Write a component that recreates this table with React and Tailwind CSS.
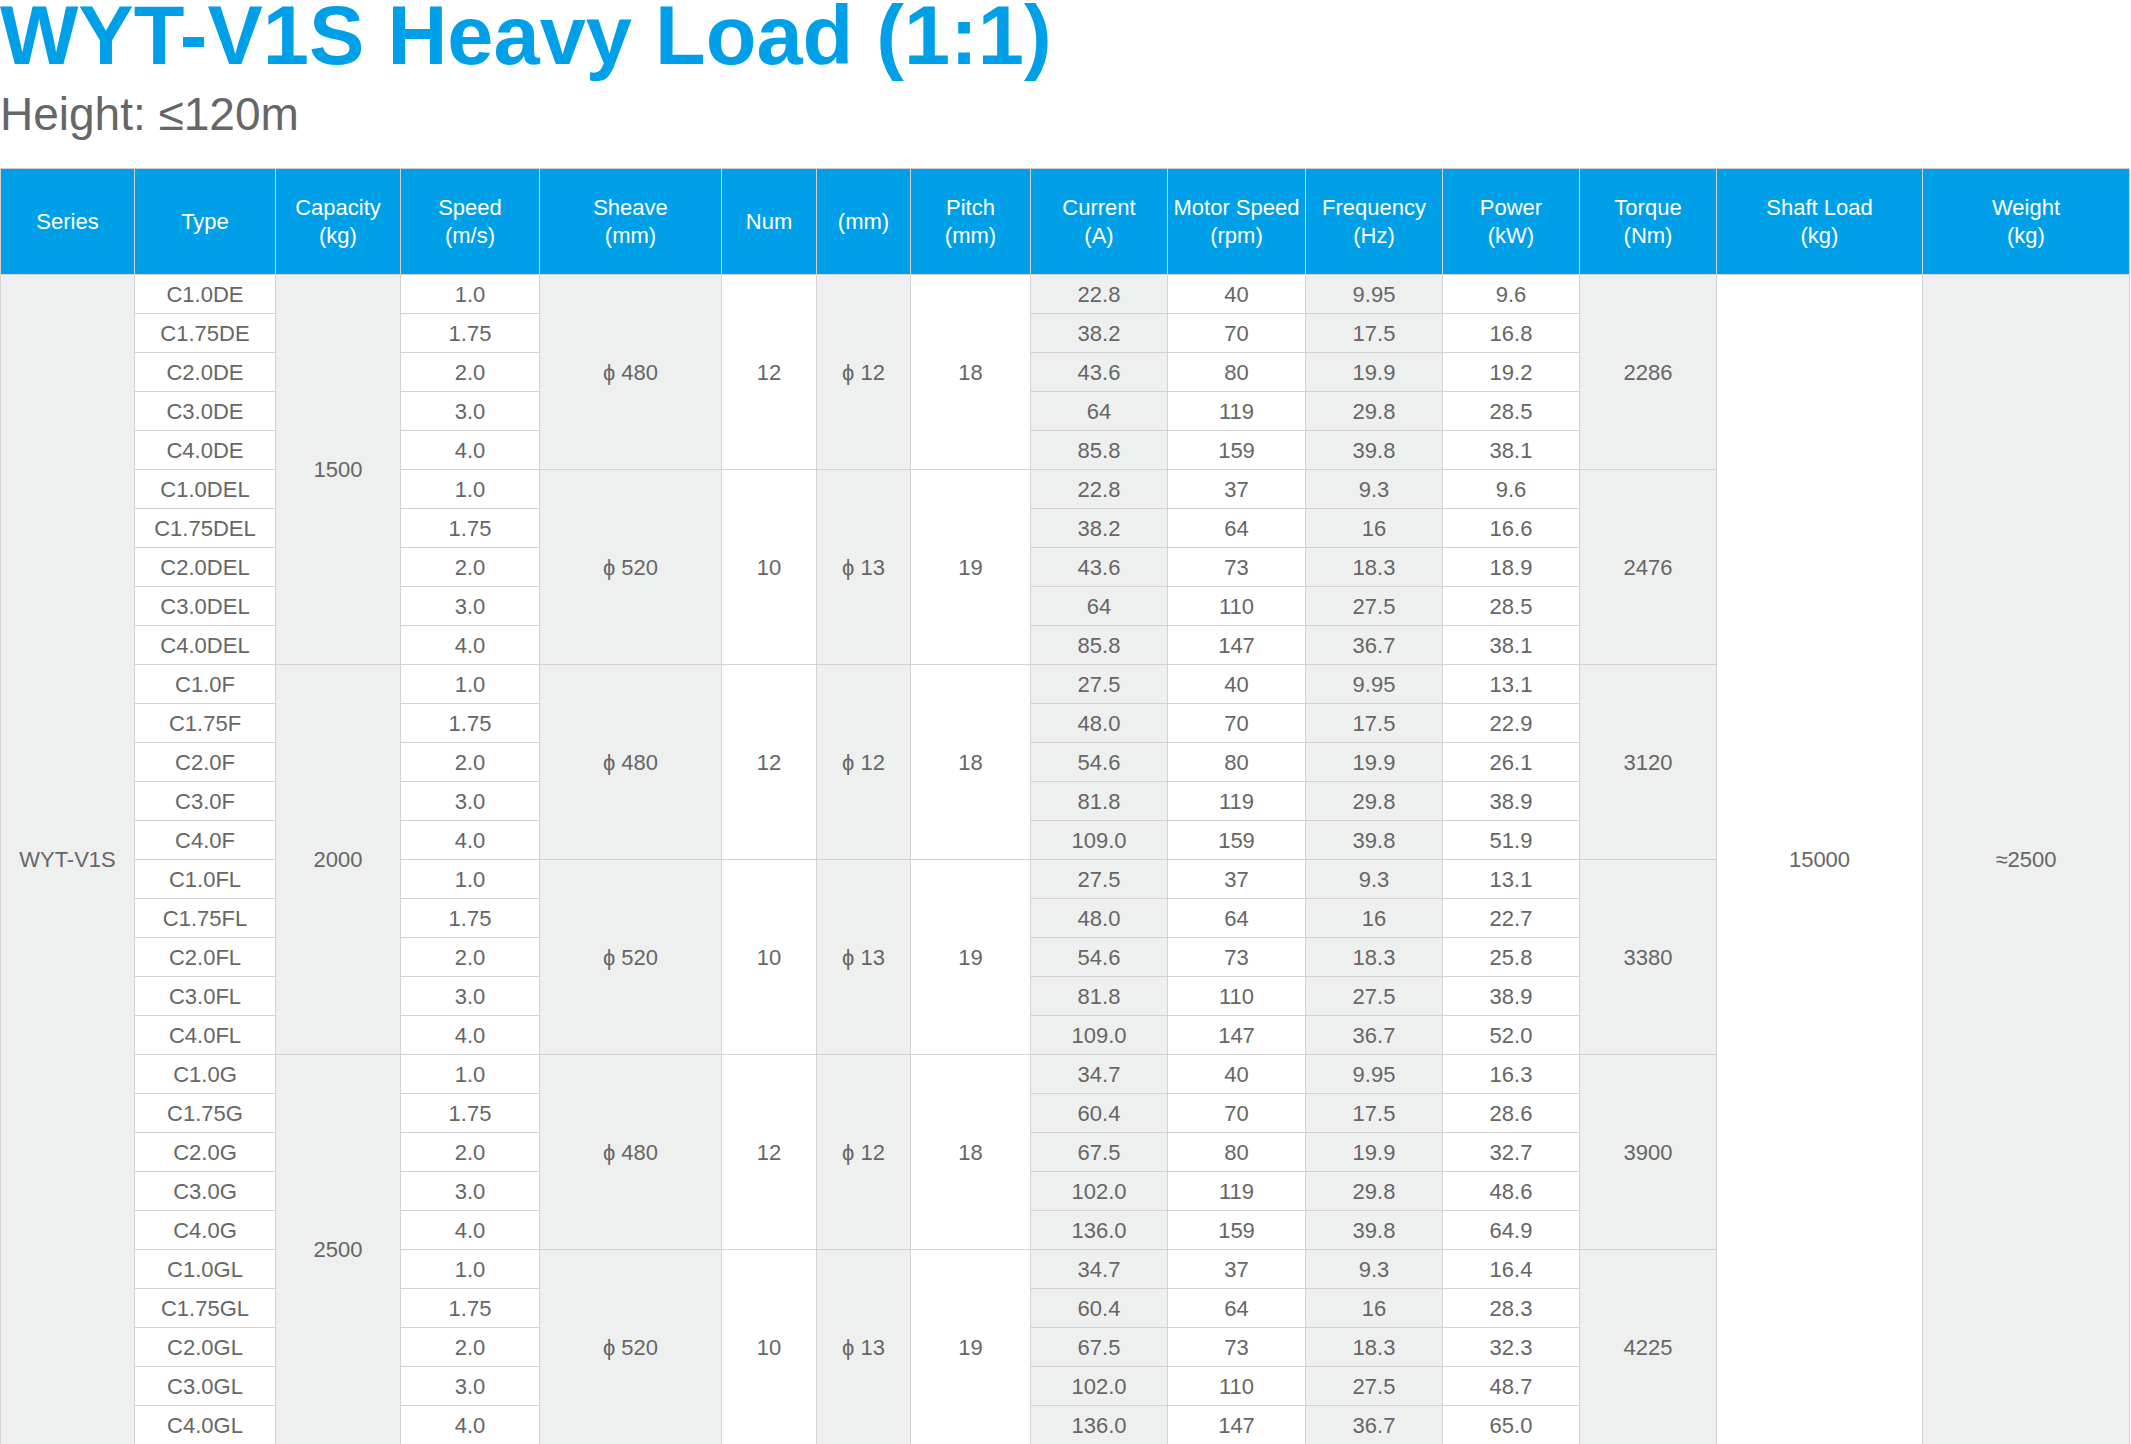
import React from 'react';

const speeds = ['1.0', '1.75', '2.0', '3.0', '4.0'];

const blocks = [
  {
    capacity: '1500',
    groups: [
      {
        suffix: 'DE', sheave: 'ϕ 480', num: '12', rope: 'ϕ 12', pitch: '18', torque: '2286',
        current: ['22.8', '38.2', '43.6', '64', '85.8'],
        motor: ['40', '70', '80', '119', '159'],
        freq: ['9.95', '17.5', '19.9', '29.8', '39.8'],
        power: ['9.6', '16.8', '19.2', '28.5', '38.1'],
      },
      {
        suffix: 'DEL', sheave: 'ϕ 520', num: '10', rope: 'ϕ 13', pitch: '19', torque: '2476',
        current: ['22.8', '38.2', '43.6', '64', '85.8'],
        motor: ['37', '64', '73', '110', '147'],
        freq: ['9.3', '16', '18.3', '27.5', '36.7'],
        power: ['9.6', '16.6', '18.9', '28.5', '38.1'],
      },
    ],
  },
  {
    capacity: '2000',
    groups: [
      {
        suffix: 'F', sheave: 'ϕ 480', num: '12', rope: 'ϕ 12', pitch: '18', torque: '3120',
        current: ['27.5', '48.0', '54.6', '81.8', '109.0'],
        motor: ['40', '70', '80', '119', '159'],
        freq: ['9.95', '17.5', '19.9', '29.8', '39.8'],
        power: ['13.1', '22.9', '26.1', '38.9', '51.9'],
      },
      {
        suffix: 'FL', sheave: 'ϕ 520', num: '10', rope: 'ϕ 13', pitch: '19', torque: '3380',
        current: ['27.5', '48.0', '54.6', '81.8', '109.0'],
        motor: ['37', '64', '73', '110', '147'],
        freq: ['9.3', '16', '18.3', '27.5', '36.7'],
        power: ['13.1', '22.7', '25.8', '38.9', '52.0'],
      },
    ],
  },
  {
    capacity: '2500',
    groups: [
      {
        suffix: 'G', sheave: 'ϕ 480', num: '12', rope: 'ϕ 12', pitch: '18', torque: '3900',
        current: ['34.7', '60.4', '67.5', '102.0', '136.0'],
        motor: ['40', '70', '80', '119', '159'],
        freq: ['9.95', '17.5', '19.9', '29.8', '39.8'],
        power: ['16.3', '28.6', '32.7', '48.6', '64.9'],
      },
      {
        suffix: 'GL', sheave: 'ϕ 520', num: '10', rope: 'ϕ 13', pitch: '19', torque: '4225',
        current: ['34.7', '60.4', '67.5', '102.0', '136.0'],
        motor: ['37', '64', '73', '110', '147'],
        freq: ['9.3', '16', '18.3', '27.5', '36.7'],
        power: ['16.4', '28.3', '32.3', '48.7', '65.0'],
      },
    ],
  },
];

const headers = [
  ['Series'],
  ['Type'],
  ['Capacity', '(kg)'],
  ['Speed', '(m/s)'],
  ['Sheave', '(mm)'],
  ['Num'],
  ['(mm)'],
  ['Pitch', '(mm)'],
  ['Current', '(A)'],
  ['Motor Speed', '(rpm)'],
  ['Frequency', '(Hz)'],
  ['Power', '(kW)'],
  ['Torque', '(Nm)'],
  ['Shaft Load', '(kg)'],
  ['Weight', '(kg)'],
];

const widths = [134, 141, 125, 139, 182, 95, 94, 120, 137, 138, 137, 137, 137, 206, 207];

// columns are striped: even index grey, odd index white
const gray = 'bg-[#eef0ef]';
const white = 'bg-white';
const cell = 'h-[39px] p-0 border border-[#d2d2d2] text-center align-middle whitespace-nowrap';

function Cell({ col, rowSpan, children }) {
  return (
    <td rowSpan={rowSpan} className={`${cell} ${col % 2 === 0 ? gray : white}`}>
      {children}
    </td>
  );
}

export default function App() {
  const rows = [];
  blocks.forEach((block, bi) => {
    block.groups.forEach((g, gi) => {
      speeds.forEach((speed, i) => {
        const first = bi === 0 && gi === 0 && i === 0;
        const blockFirst = gi === 0 && i === 0;
        const groupFirst = i === 0;
        rows.push(
          <tr key={`${block.capacity}-${g.suffix}-${i}`}>
            {first && <Cell col={0} rowSpan={30}>WYT-V1S</Cell>}
            <Cell col={1}>{`C${speed}${g.suffix}`}</Cell>
            {blockFirst && <Cell col={2} rowSpan={10}>{block.capacity}</Cell>}
            <Cell col={3}>{speed}</Cell>
            {groupFirst && <Cell col={4} rowSpan={5}>{g.sheave}</Cell>}
            {groupFirst && <Cell col={5} rowSpan={5}>{g.num}</Cell>}
            {groupFirst && <Cell col={6} rowSpan={5}>{g.rope}</Cell>}
            {groupFirst && <Cell col={7} rowSpan={5}>{g.pitch}</Cell>}
            <Cell col={8}>{g.current[i]}</Cell>
            <Cell col={9}>{g.motor[i]}</Cell>
            <Cell col={10}>{g.freq[i]}</Cell>
            <Cell col={11}>{g.power[i]}</Cell>
            {groupFirst && <Cell col={12} rowSpan={5}>{g.torque}</Cell>}
            {first && <Cell col={13} rowSpan={30}>15000</Cell>}
            {first && <Cell col={14} rowSpan={30}>≈2500</Cell>}
          </tr>
        );
      });
    });
  });

  return (
    <div className="w-[2131px] bg-white font-['Liberation_Sans',Arial,sans-serif]">
      <h1 className="pt-[2px] text-[83px] leading-[67px] font-bold text-[#00a0e9]">WYT-V1S Heavy Load (1:1)</h1>
      <p className="mt-[20px] text-[46px] leading-[50px] text-[#666666]">Height: ≤120m</p>

      <table className="mt-[29px] w-[2130px] table-fixed border-collapse border border-[#d2d2d2] text-[22px] text-[#666666]">
        <colgroup>
          {widths.map((w, i) => (
            <col key={i} style={{ width: w }} />
          ))}
        </colgroup>
        <thead>
          <tr>
            {headers.map((lines, i) => (
              <th
                key={i}
                className="h-[106px] p-0 border-x border-[#d8cfc7] border-t border-t-[#cfcfcf] bg-[#00a0e9] text-center align-middle font-normal text-[22px] leading-[28px] text-white whitespace-nowrap"
              >
                {lines.map((l, j) => (
                  <div key={j}>{l}</div>
                ))}
              </th>
            ))}
          </tr>
        </thead>
        <tbody>{rows}</tbody>
      </table>
    </div>
  );
}
